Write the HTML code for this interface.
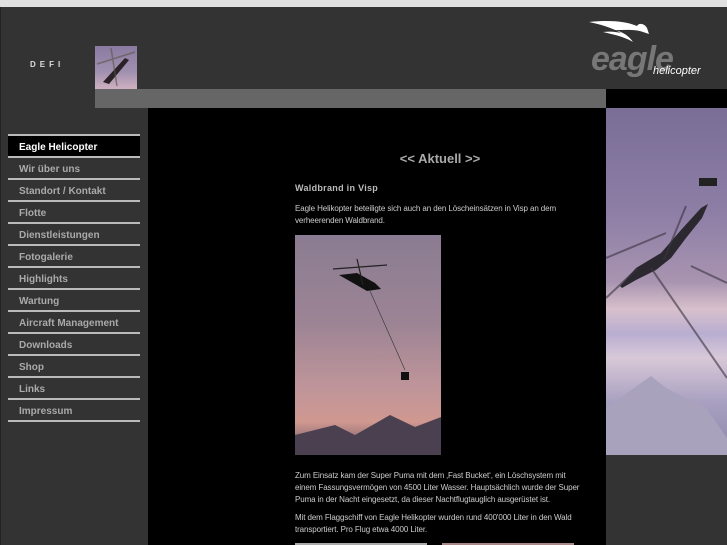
<!DOCTYPE html>
<html><head><meta charset="utf-8"><style>
*{margin:0;padding:0;box-sizing:border-box}
body{width:727px;height:545px;overflow:hidden;background:#333;font-family:"Liberation Sans",sans-serif;position:relative}
.a{position:absolute}
.nav div{position:absolute;left:8px;width:132px;height:22px;border-bottom:2px solid #bbb;color:#aaa;font-size:10px;font-weight:bold;padding:6px 0 0 11px}
p{font-size:8px;color:#ccc;line-height:12px;letter-spacing:-.1px}
</style></head><body>
<div class="a" style="left:0;top:0;width:727px;height:7px;background:#e0e0e0"></div>
<div class="a" style="left:0;top:7px;width:1px;height:538px;background:#222"></div>
<div class="a" style="left:30px;top:60px;font-size:8px;color:#ddd;font-weight:bold;letter-spacing:4px">DEFI</div>
<div class="a" style="left:95px;top:46px;width:42px;height:43px;background:linear-gradient(#8a7aa0,#a090b0 60%,#d0b0c0)">
<svg width="42" height="43"><path d="M8 36 L30 12 L34 14 L14 38Z" fill="#2a2228"/><path d="M2 18 L40 6 M16 2 L22 40" stroke="#554" stroke-width="1.5" opacity=".6"/></svg></div>
<div class="a" style="left:95px;top:89px;width:511px;height:19px;background:#666"></div>
<div class="a" style="left:606px;top:89px;width:121px;height:19px;background:#000"></div>
<svg class="a" style="left:585px;top:18px" width="130" height="62">
<path d="M4 4 C24 2 40 3 52 8 C54 4 60 6 62 10 L64 16 L58 14 C50 11 40 12 30 12 C38 14 44 18 48 24 C38 18 26 16 18 14 C26 13 32 14 36 15 C28 10 14 6 4 4Z" fill="#fff"/>
<text x="6" y="52" font-family="Liberation Sans" font-size="34" font-weight="bold" font-style="italic" fill="#777" letter-spacing="-1">eagle</text>
<text x="68" y="56" font-family="Liberation Sans" font-size="11" font-style="italic" fill="#fff" transform="scale(1,1)">helicopter</text>
</svg>
<div class="a" style="left:148px;top:108px;width:458px;height:437px;background:#000"></div>
<div class="a" style="left:606px;top:108px;width:121px;height:347px;background:linear-gradient(#7a6e96 0%,#8d7ea6 30%,#a894b0 50%,#d8c0cc 58%,#b8aed0 65%,#d8c8d8 72%,#a8a0c0 85%,#8e88a8 100%)">
<svg width="121" height="347"><path d="M14 178 L30 160 L55 145 L75 122 L95 100 L102 96 L96 110 L80 130 L65 150 L50 162 L30 172 L16 180Z" fill="#2c2830"/><rect x="93" y="70" width="18" height="8" fill="#222"/><path d="M0 150 L60 125 M80 98 L58 152 M0 190 L32 160 M85 158 L121 175 M45 160 L121 270" stroke="#3a3340" stroke-width="2" opacity=".6"/><path d="M0 300 L45 268 L60 280 L100 300 L121 330 L121 347 L0 347Z" fill="#a9a2bd"/></svg></div>
<div class="a" style="left:8px;top:134px;width:132px;height:2px;background:#bbb"></div>
<div class="a" style="left:8px;top:136px;width:132px;height:21px;background:#000"></div>
<div class="nav">
<div style="top:136px;color:#fff">Eagle Helicopter</div>
<div style="top:158px">Wir über uns</div>
<div style="top:180px">Standort / Kontakt</div>
<div style="top:202px">Flotte</div>
<div style="top:224px">Dienstleistungen</div>
<div style="top:246px">Fotogalerie</div>
<div style="top:268px">Highlights</div>
<div style="top:290px">Wartung</div>
<div style="top:312px">Aircraft Management</div>
<div style="top:334px">Downloads</div>
<div style="top:356px">Shop</div>
<div style="top:378px">Links</div>
<div style="top:400px">Impressum</div>
</div>
<div class="a" style="left:340px;top:151px;width:200px;text-align:center;font-size:13px;font-weight:bold;color:#aaa">&lt;&lt; Aktuell &gt;&gt;</div>
<div class="a" style="left:295px;top:183px;font-size:9px;font-weight:bold;color:#bbb;letter-spacing:.3px">Waldbrand in Visp</div>
<p class="a" style="left:295px;top:203px;width:280px">Eagle Helikopter beteiligte sich auch an den Löscheinsätzen in Visp an dem verheerenden Waldbrand.</p>
<div class="a" style="left:295px;top:235px;width:146px;height:220px;background:linear-gradient(#8a7c92,#9c8494 40%,#c0959a 70%,#d09890 85%,#605060)">
<svg width="146" height="220"><path d="M44 40 L62 38 L80 48 L86 54 L72 56 L58 48Z" fill="#111"/><path d="M38 34 L92 30 M62 24 L68 50" stroke="#222" stroke-width="1.2"/><path d="M75 56 L110 135" stroke="#333" stroke-width=".6"/><rect x="106" y="137" width="8" height="8" fill="#111"/><path d="M0 200 L40 190 L60 200 L95 180 L120 192 L146 182 L146 220 L0 220Z" fill="#4a4050"/></svg></div>
<p class="a" style="left:295px;top:470px;width:288px">Zum Einsatz kam der Super Puma mit dem ‚Fast Bucket‘, ein Löschsystem mit einem Fassungsvermögen von 4500 Liter Wasser. Hauptsächlich wurde der Super Puma in der Nacht eingesetzt, da dieser Nachtflugtauglich ausgerüstet ist.</p>
<p class="a" style="left:295px;top:512px;width:290px">Mit dem Flaggschiff von Eagle Helikopter wurden rund 400'000 Liter in den Wald transportiert. Pro Flug etwa 4000 Liter.</p>
<div class="a" style="left:295px;top:543px;width:132px;height:2px;background:#aaa"></div>
<div class="a" style="left:442px;top:543px;width:132px;height:2px;background:#a88"></div>
</body></html>
